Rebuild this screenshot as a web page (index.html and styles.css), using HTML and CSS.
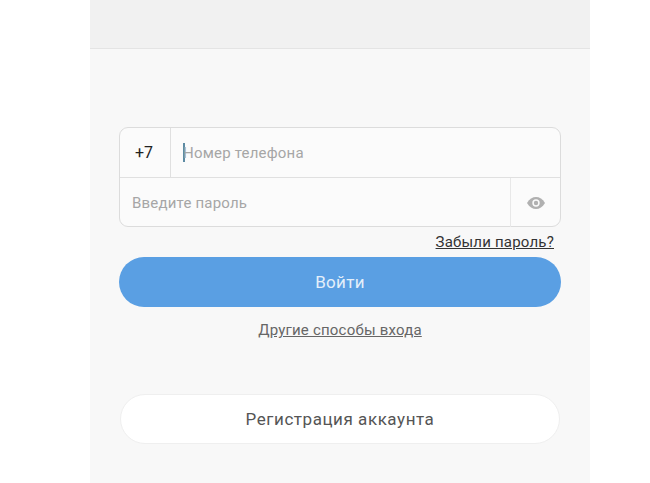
FILE: index.html
```html
<!DOCTYPE html>
<html lang="ru">
<head>
    <meta charset="UTF-8">
    <meta name="viewport" content="width=device-width, initial-scale=1.0">
    <title>Вход</title>
    <link rel="stylesheet" href="styles.css">
</head>
<body>
    <div class="screen">
        <div class="topbar"></div>
        <div class="content">
            <form class="login-box">
                <div class="row">
                    <span class="code">+7</span>
                    <div class="field"><span class="caret"></span><span class="placeholder">Номер телефона</span></div>
                </div>
                <div class="row">
                    <div class="field pass"><span class="placeholder">Введите пароль</span></div>
                    <span class="eye">
                        <svg width="20" height="14" viewBox="0 0 20 14">
                            <path d="M1 7C3.500 2.800 6.500 1 10 1s6.500 1.800 9 6c-2.500 4.200-5.500 6-9 6S3.500 11.200 1 7z" fill="#b0b0b0"/>
                            <circle cx="10" cy="7" r="3.700" fill="#fafafa"/>
                            <circle cx="10" cy="7" r="2.200" fill="#b0b0b0"/>
                        </svg>
                    </span>
                </div>
            </form>
            <div class="forgot"><a href="#">Забыли пароль?</a></div>
            <button class="btn-login" type="button">Войти</button>
            <div class="other"><a href="#">Другие способы входа</a></div>
            <button class="btn-register" type="button">Регистрация аккаунта</button>
        </div>
    </div>
</body>
</html>
```

FILE: styles.css
```css
html, body {
    height: 100%;
}

body {
    margin: 0;
    padding: 0;
    background-color: white;
    font-family: Roboto, "Noto Sans", sans-serif;
    overflow: hidden;
}

.screen {
    width: 500px;
    height: 483px;
    margin-left: 90px;
    background-color: #f8f8f8;
}

.topbar {
    height: 48px;
    background-color: #f1f1f1;
    border-bottom: 1px solid #e4e4e4;
}

.content {
    padding: 78px 29px 0;
}

.login-box {
    height: 100px;
    box-sizing: border-box;
    border: 1px solid #dcdcdc;
    border-radius: 9px;
    background-color: #fbfbfb;
}

.row {
    display: flex;
    align-items: stretch;
    height: 49px;
}

.row + .row {
    border-top: 1px solid #e0e0e0;
}

.code {
    width: 51px;
    box-sizing: border-box;
    padding-right: 2px;
    border-right: 1px solid #e0e0e0;
    display: flex;
    align-items: center;
    justify-content: center;
    font-size: 16px;
    color: #222;
}

.field {
    flex: 1;
    display: flex;
    align-items: center;
    padding-left: 12px;
}

.caret {
    width: 2px;
    height: 19px;
    background-color: #5d8ba3;
    margin-right: -2px;
}

.placeholder {
    font-size: 15px;
    letter-spacing: 0.2px;
    color: #a6a6a6;
}

.eye {
    width: 49px;
    border-left: 1px solid #e8e8e8;
    display: flex;
    align-items: center;
    justify-content: center;
}

.forgot {
    height: 30px;
    display: flex;
    align-items: center;
    justify-content: flex-end;
    padding-right: 7px;
}

.forgot a {
    font-size: 15px;
    letter-spacing: 0.2px;
    color: #333;
}

.btn-login {
    display: block;
    width: 100%;
    height: 50px;
    border: none;
    border-radius: 25px;
    background-color: #5a9fe3;
    color: #e4effa;
    font-family: inherit;
    font-size: 17px;
    letter-spacing: 0.3px;
}

.other {
    margin-top: 13px;
    text-align: center;
    line-height: 20px;
}

.other a {
    font-size: 15px;
    letter-spacing: 0.2px;
    color: #666;
}

.btn-register {
    display: block;
    width: 440px;
    height: 50px;
    margin: 54px auto 0;
    border: 1px solid #efefef;
    border-radius: 25px;
    background-color: white;
    color: #555;
    font-family: inherit;
    font-size: 17px;
    letter-spacing: 0.55px;
}
```
